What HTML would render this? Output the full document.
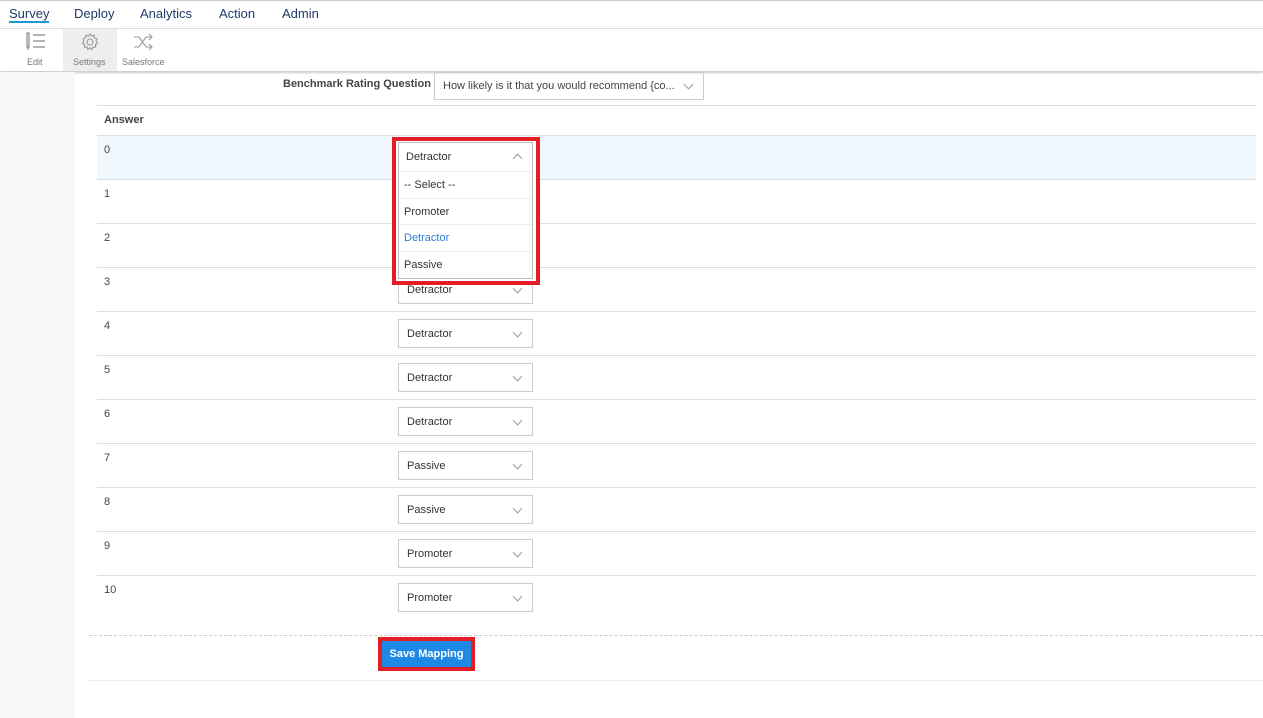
<!DOCTYPE html>
<html><head><style>
*{box-sizing:border-box;margin:0;padding:0}
body{width:1263px;height:718px;overflow:hidden;background:#fff;font-family:"Liberation Sans",sans-serif;font-size:11px;color:#333;position:relative}
.abs{position:absolute}
.nav{top:0;left:0;width:1263px;height:29px;border-top:1px solid #ccc;border-bottom:1px solid #ddd}
.nav span{position:absolute;top:5px;font-size:13px;color:#1f3a68}
.tb{top:29px;left:0;width:1263px;height:42px;box-shadow:0 2px 2px #ccc;background:#fff}
.tb .lb{position:absolute;top:28px;font-size:9px;color:#777}
.side{top:72px;left:0;width:75px;height:646px;background:#f7f7f7}
.row{position:absolute;left:97px;width:1159px;height:44px;border-top:1px solid #ddd}
.row .n{position:absolute;left:7px;top:8px;font-size:11px;color:#444}
.sel{position:absolute;left:301px;top:7px;width:135px;height:29px;border:1px solid #ccc;background:#fff;padding:8px 0 0 8px;font-size:11px}
.chev{position:absolute;right:11px;top:9px;width:7px;height:7px;border-right:1px solid #999;border-bottom:1px solid #999;transform:rotate(45deg)}
.dd .o{height:26.5px;border-top:1px solid #eee;padding:7px 0 0 5px}
</style></head><body>
<div class="abs nav">
<span style="left:9px;color:#1f3a68;border-bottom:2px solid #1a9ad6;line-height:15px">Survey</span>
<span style="left:74px">Deploy</span><span style="left:140px">Analytics</span><span style="left:219px">Action</span><span style="left:282px">Admin</span>
</div>
<div class="abs tb">
<svg class="abs" style="left:25px;top:3px" width="22" height="20" viewBox="0 0 22 20" fill="none" stroke="#888" stroke-width="1.2"><rect x="2" y="1" width="2" height="14"/><path d="M3 15l0 3M8 3h12M8 9h12M8 15h12"/></svg>
<div class="abs" style="left:63px;top:0;width:54px;height:42px;background:#eee"></div>
<svg class="abs" style="left:80px;top:3px" width="20" height="20" viewBox="0 0 20 20" fill="none" stroke="#999" stroke-width="1.1"><circle cx="10" cy="10" r="3"/><path d="M10 2l1.5 2.2 2.6-.9.3 2.7 2.6.7-1 2.5 1.8 2-2.4 1.3.3 2.7-2.7-.2-1 2.5-2-1.8-2 1.8-1-2.5-2.7.2.3-2.7-2.4-1.3 1.8-2-1-2.5 2.6-.7.3-2.7 2.6.9z"/></svg>
<svg class="abs" style="left:133px;top:3px" width="22" height="20" viewBox="0 0 22 20" fill="none" stroke="#999" stroke-width="1.1"><path d="M1 5h5l7 10h5M1 15h5l7-10h5M16 2l3 3-3 3M16 12l3 3-3 3"/></svg>
<span class="lb" style="left:27px">Edit</span><span class="lb" style="left:73px">Settings</span><span class="lb" style="left:122px">Salesforce</span>
</div>
<div class="abs side"></div>
<div class="abs" style="left:283px;top:78px;font-weight:bold;font-size:11px;color:#444">Benchmark Rating Question</div>
<div class="abs" style="left:434px;top:72px;width:270px;height:28px;border:1px solid #ccc;padding:7px 0 0 8px;color:#444">How likely is it that you would recommend {co...<div class="chev" style="top:8px"></div></div>
<div class="row" style="top:105px;height:30px"><span class="n" style="font-weight:bold;top:8px">Answer</span></div>
<div class="row" style="top:135px;background:#f0f7fd"><span class="n">0</span></div>
<div class="row" style="top:179px"><span class="n">1</span></div>
<div class="row" style="top:223px"><span class="n">2</span></div>
<div class="row" style="top:267px"><span class="n">3</span><div class="sel">Detractor<div class="chev"></div></div></div>
<div class="row" style="top:311px"><span class="n">4</span><div class="sel">Detractor<div class="chev"></div></div></div>
<div class="row" style="top:355px"><span class="n">5</span><div class="sel">Detractor<div class="chev"></div></div></div>
<div class="row" style="top:399px"><span class="n">6</span><div class="sel">Detractor<div class="chev"></div></div></div>
<div class="row" style="top:443px"><span class="n">7</span><div class="sel">Passive<div class="chev"></div></div></div>
<div class="row" style="top:487px"><span class="n">8</span><div class="sel">Passive<div class="chev"></div></div></div>
<div class="row" style="top:531px"><span class="n">9</span><div class="sel">Promoter<div class="chev"></div></div></div>
<div class="row" style="top:575px"><span class="n">10</span><div class="sel">Promoter<div class="chev"></div></div></div>
<div class="abs" style="left:392px;top:137px;width:148px;height:148px;border:4px solid #e41e26;background:#fff"></div>
<div class="abs dd" style="left:398px;top:142px;width:135px;height:137px;border:1px solid #bbb;background:#fff">
<div style="position:relative;padding:8px 0 0 7px;height:28px">Detractor<span class="chev" style="transform:rotate(225deg);top:12px"></span></div>
<div class="o">-- Select --</div><div class="o">Promoter</div><div class="o" style="color:#2f7bd6">Detractor</div><div class="o">Passive</div>
</div>
<div class="abs" style="left:89px;top:635px;width:1174px;border-top:1px dashed #ccc"></div>
<div class="abs" style="left:378px;top:637px;width:97px;height:34px;background:#e41e26;padding:4px"><div style="background:#1e88e5;color:#fff;font-weight:bold;height:26px;padding-top:7px;text-align:center">Save Mapping</div></div>
<div class="abs" style="left:87px;top:680px;width:1176px;border-top:1px solid #eee"></div>
</body></html>
